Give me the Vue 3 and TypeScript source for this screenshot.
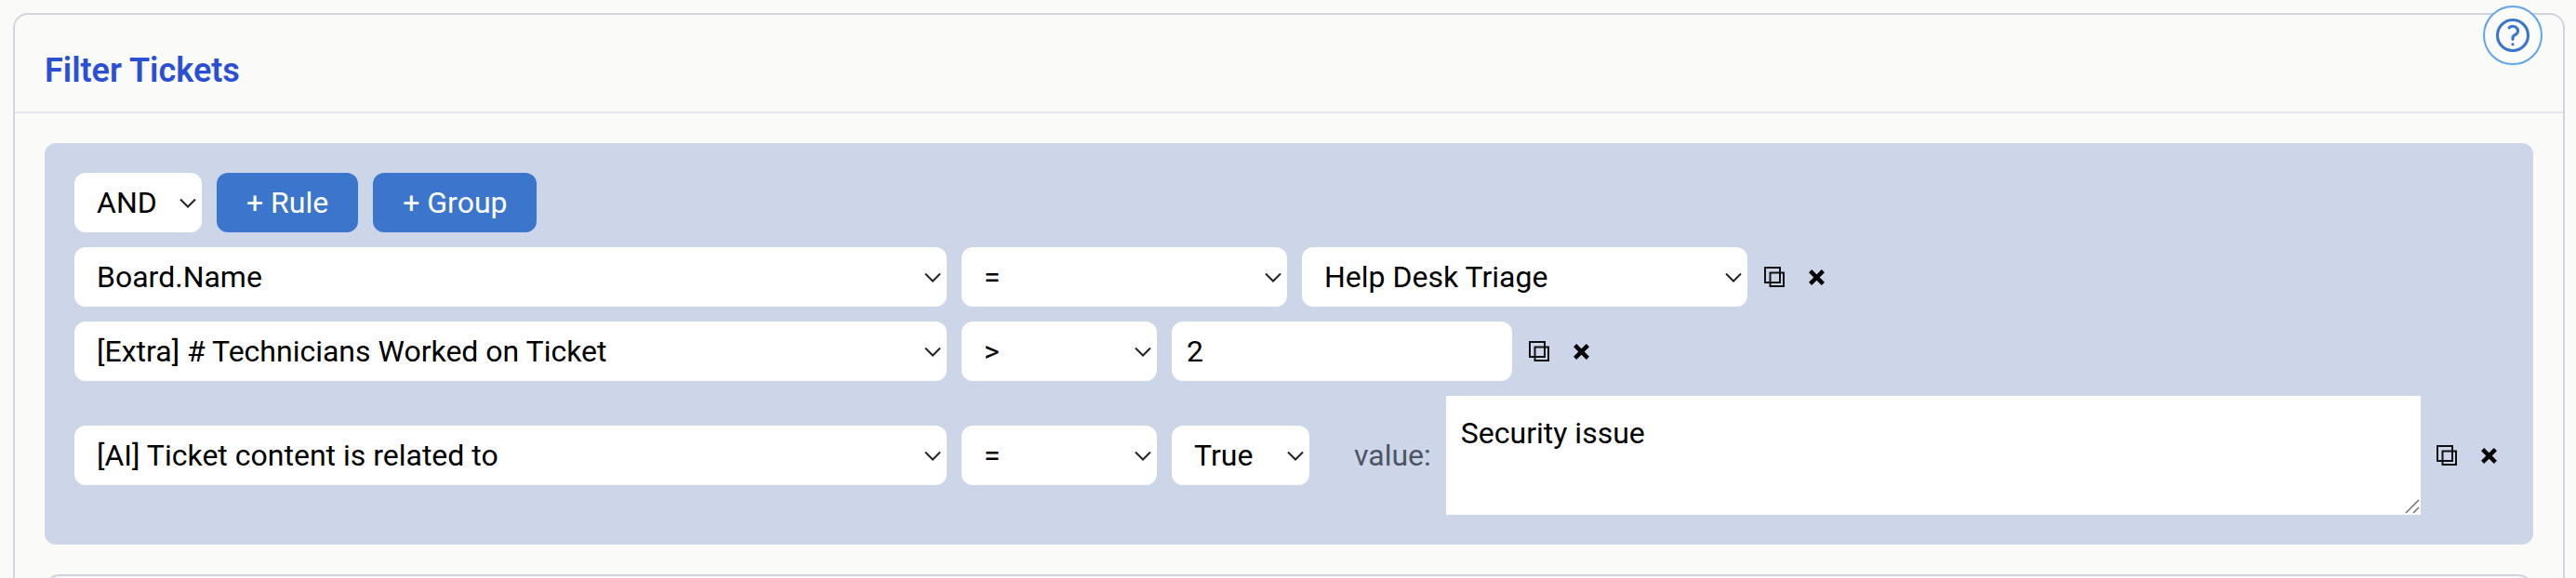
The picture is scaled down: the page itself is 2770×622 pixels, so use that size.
<template>
  <div class="page">
    <section class="panel">
      <button class="help" type="button" aria-label="Help">
        <svg viewBox="0 0 24 24" width="44" height="44" fill="none" stroke="currentColor" stroke-width="1.7" stroke-linecap="round" stroke-linejoin="round">
          <path d="M9.879 7.519c1.171-1.025 3.071-1.025 4.242 0 1.172 1.025 1.172 2.687 0 3.712-.203.179-.43.326-.67.442-.745.361-1.45.999-1.45 1.827v.75M21 12a9 9 0 11-18 0 9 9 0 0118 0zm-9 5.25h.008v.008H12v-.008z" />
        </svg>
      </button>

      <header class="panel-header">
        <h2>Filter Tickets</h2>
      </header>

      <div class="panel-body">
        <div class="query-group">
          <div class="group-actions">
            <select v-model="conjunction" class="w-conjunction">
              <option>AND</option>
              <option>OR</option>
            </select>
            <button class="add-btn" type="button">+ Rule</button>
            <button class="add-btn" type="button">+ Group</button>
          </div>

          <!-- Board rule -->
          <div class="rule">
            <select v-model="rules[0].field" class="w-field">
              <option v-for="f in fields" :key="f">{{ f }}</option>
            </select>
            <select v-model="rules[0].op" class="w-op-wide">
              <option v-for="o in operators" :key="o">{{ o }}</option>
            </select>
            <select v-model="board" class="w-board">
              <option>Help Desk Triage</option>
            </select>
            <div class="rule-tools tools-short">
              <button class="icon-btn" type="button" aria-label="Copy rule">
                <svg viewBox="0 0 22 22" width="22" height="22" fill="none" stroke="#111" stroke-width="2">
                  <rect x="1" y="1" width="16" height="16" />
                  <rect x="6.5" y="6.5" width="14.5" height="14.5" />
                </svg>
              </button>
              <button class="icon-btn" type="button" aria-label="Remove rule">
                <svg viewBox="0 0 17 17" width="17" height="17" fill="none" stroke="#000" stroke-width="4.4">
                  <path d="M1.6 1.6l13.8 13.8M15.4 1.6L1.6 15.4" />
                </svg>
              </button>
            </div>
          </div>

          <!-- Technicians rule -->
          <div class="rule">
            <select v-model="rules[1].field" class="w-field">
              <option v-for="f in fields" :key="f">{{ f }}</option>
            </select>
            <select v-model="rules[1].op" class="w-op">
              <option v-for="o in operators" :key="o">{{ o }}</option>
            </select>
            <input v-model="count" class="w-input" type="text" />
            <div class="rule-tools tools-short">
              <button class="icon-btn" type="button" aria-label="Copy rule">
                <svg viewBox="0 0 22 22" width="22" height="22" fill="none" stroke="#111" stroke-width="2">
                  <rect x="1" y="1" width="16" height="16" />
                  <rect x="6.5" y="6.5" width="14.5" height="14.5" />
                </svg>
              </button>
              <button class="icon-btn" type="button" aria-label="Remove rule">
                <svg viewBox="0 0 17 17" width="17" height="17" fill="none" stroke="#000" stroke-width="4.4">
                  <path d="M1.6 1.6l13.8 13.8M15.4 1.6L1.6 15.4" />
                </svg>
              </button>
            </div>
          </div>

          <!-- AI rule -->
          <div class="rule">
            <select v-model="rules[2].field" class="w-field">
              <option v-for="f in fields" :key="f">{{ f }}</option>
            </select>
            <select v-model="rules[2].op" class="w-op">
              <option v-for="o in operators" :key="o">{{ o }}</option>
            </select>
            <select v-model="truth" class="w-bool">
              <option>True</option>
              <option>False</option>
            </select>
            <label class="value-label">value:</label>
            <div class="value-wrap">
              <textarea v-model="prompt" class="value-text"></textarea>
              <svg class="grip" viewBox="0 0 16 16" width="16" height="16" fill="none" stroke="#777" stroke-width="1.6">
                <path d="M1 15L15 1M9 15l6-6" />
              </svg>
            </div>
            <div class="rule-tools tools-long">
              <button class="icon-btn" type="button" aria-label="Copy rule">
                <svg viewBox="0 0 22 22" width="22" height="22" fill="none" stroke="#111" stroke-width="2">
                  <rect x="1" y="1" width="16" height="16" />
                  <rect x="6.5" y="6.5" width="14.5" height="14.5" />
                </svg>
              </button>
              <button class="icon-btn" type="button" aria-label="Remove rule">
                <svg viewBox="0 0 17 17" width="17" height="17" fill="none" stroke="#000" stroke-width="4.4">
                  <path d="M1.6 1.6l13.8 13.8M15.4 1.6L1.6 15.4" />
                </svg>
              </button>
            </div>
          </div>
        </div>

        <div class="next-panel"></div>
      </div>
    </section>
  </div>
</template>

<script setup lang="ts">
import { ref } from 'vue';

interface Rule {
  field: string;
  op: string;
}

const fields = ['Board.Name', '[Extra] # Technicians Worked on Ticket', '[AI] Ticket content is related to'];
const operators = ['=', '>', '<'];

const conjunction = ref('AND');
const board = ref('Help Desk Triage');
const count = ref('2');
const truth = ref('True');
const prompt = ref('Security issue');

const rules = ref<Rule[]>([
  { field: fields[0], op: '=' },
  { field: fields[1], op: '>' },
  { field: fields[2], op: '=' },
]);
</script>

<style>
html,
body {
  height: 622px;
  overflow: hidden;
  background: #fafaf8;
}
</style>

<style scoped>
.page {
  padding: 14px 12px 0 14px;
  font-family: Roboto, 'Liberation Sans', sans-serif;
  -webkit-font-smoothing: antialiased;
}

.panel {
  position: relative;
  border: 2px solid #d1d5db;
  border-radius: 16px;
  background: #fafaf8;
}

.help {
  position: absolute;
  top: -10px;
  right: 22px;
  width: 64px;
  height: 64px;
  display: flex;
  align-items: center;
  justify-content: center;
  padding: 0;
  border: 2px solid #60a5ea;
  border-radius: 50%;
  background: #fbfbfa;
  color: #3b76cc;
}

.panel-header {
  padding: 39px 32px 22px;
  border-bottom: 2px solid #e5e7eb;
}

.panel-header h2 {
  margin: 0;
  font-size: 36px;
  line-height: 43px;
  font-weight: 600;
  color: #2b4fd3;
}

.panel-body {
  padding: 32px 32px 0;
}

.query-group {
  display: flex;
  flex-direction: column;
  gap: 16px;
  padding: 32px;
  border-radius: 12px;
  background: #cdd6e9;
}

.group-actions,
.rule {
  display: flex;
  align-items: center;
  gap: 16px;
}

select,
input,
.add-btn {
  height: 64px;
  box-sizing: border-box;
  border: none;
  border-radius: 12px;
  font-family: inherit;
  font-size: 32px;
}

select {
  appearance: none;
  padding: 0 40px 0 24px;
  color: #000;
  background: #fff url("data:image/svg+xml,%3Csvg xmlns='http://www.w3.org/2000/svg' width='18' height='11' fill='none' stroke='%23222' stroke-width='2'%3E%3Cpath d='M1 1.5l8 8 8-8'/%3E%3C/svg%3E") no-repeat right 6px center;
}

input {
  padding: 0 16px;
  color: #000;
  background: #fff;
}

.w-conjunction { width: 137px; }
.w-field { width: 938px; }
.w-op-wide { width: 350px; }
.w-op { width: 210px; }
.w-board { width: 479px; }
.w-input { width: 366px; }
.w-bool { width: 148px; }

.add-btn {
  padding: 0 32px;
  color: #fff;
  background: #3b76cc;
}

.value-label {
  margin-left: 32px;
  font-size: 32px;
  color: #4b5563;
}

.value-wrap {
  position: relative;
  flex: 1;
  display: flex;
}

.value-text {
  flex: 1;
  height: 128px;
  box-sizing: border-box;
  padding: 16px;
  border: none;
  border-radius: 0;
  outline: none;
  resize: none;
  font-family: inherit;
  font-size: 32px;
  line-height: 48px;
  color: #000;
  background: #fff;
}

.grip {
  position: absolute;
  right: 1px;
  bottom: 1px;
}

.rule-tools {
  display: flex;
  align-items: center;
  gap: 26px;
}

.tools-short {
  margin-left: 2px;
}

.tools-long {
  margin-left: 1px;
  padding-right: 7px;
}

.icon-btn {
  display: flex;
  padding: 0;
  border: none;
  background: none;
}

.next-panel {
  height: 60px;
  margin-top: 32px;
  border: 2px solid #d1d5db;
  border-radius: 16px;
}
</style>
